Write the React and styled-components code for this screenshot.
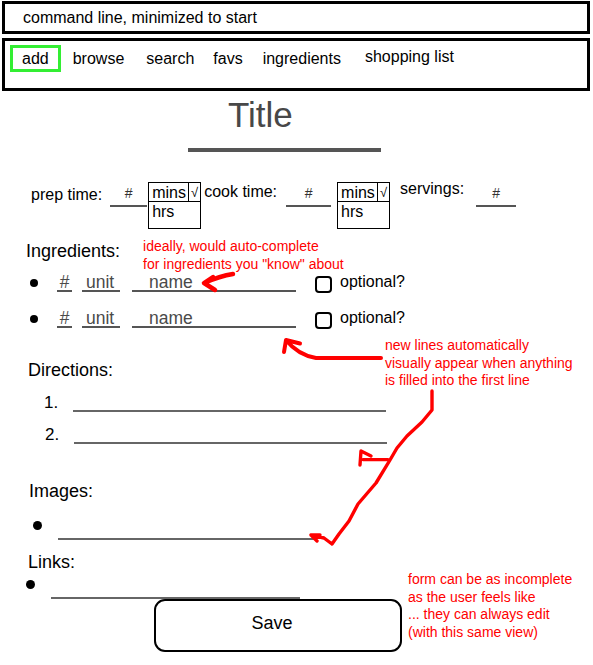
import styled, { createGlobalStyle } from "styled-components";

const GlobalStyle = createGlobalStyle`
  html, body {
    margin: 0;
    padding: 0;
    background: #ffffff;
  }
  body {
    font-family: "Liberation Sans", Arial, Helvetica, sans-serif;
    color: #000;
  }
`;

const Page = styled.div`
  position: relative;
  width: 593px;
  height: 665px;
  overflow: hidden;
  display: flex;
  flex-direction: column;
`;

const CommandBar = styled.div`
  box-sizing: border-box;
  margin: 1px 3px 0 2px;
  height: 33px;
  border: 3px solid #000;
  display: flex;
  align-items: center;
  padding-left: 18px;
  font-size: 16px;
`;

const NavBar = styled.nav`
  box-sizing: border-box;
  margin: 4px 3px 0 2px;
  height: 53px;
  border: 3px solid #000;
  display: flex;
  align-items: flex-start;
  padding: 4px 0 0 5px;
`;

const NavItem = styled.div`
  box-sizing: border-box;
  height: 27px;
  line-height: ${(p) => (p.$active ? "21px" : "27px")};
  font-size: 16px;
  margin-left: ${(p) => p.$gap || 0}px;
  margin-top: ${(p) => (p.$raise ? -p.$raise : 0)}px;
  padding: 0 ${(p) => (p.$active ? "9px" : "0")};
  border: ${(p) => (p.$active ? "3px solid #33ee33" : "none")};
`;

const TitleBlock = styled.div`
  margin-top: 6px;
  padding-left: 188px;
  display: flex;
  flex-direction: column;
  align-items: flex-start;
`;

const TitleText = styled.div`
  margin-left: 40px;
  font-size: 35px;
  line-height: 35px;
  color: #484848;
`;

const TitleBar = styled.div`
  margin-top: 16px;
  width: 193px;
  height: 4px;
  background: #555;
`;

const TimeRow = styled.div`
  margin-top: 28px;
  padding-left: 31px;
  display: flex;
  align-items: flex-start;
`;

const FieldLabel = styled.span`
  font-size: 16px;
  line-height: 18px;
  margin-left: ${(p) => p.$gap || 0}px;
  margin-top: ${(p) => p.$top || 0}px;
  white-space: nowrap;
`;

const NumBlank = styled.div`
  box-sizing: border-box;
  width: ${(p) => p.$w}px;
  height: 27px;
  margin-left: ${(p) => p.$gap || 0}px;
  padding-top: 5px;
  border-bottom: 2px solid #555;
  text-align: center;
  font-size: 14px;
  line-height: 16px;
  color: #333;
`;

const UnitSelect = styled.div`
  box-sizing: border-box;
  width: ${(p) => p.$w}px;
  height: 47px;
  margin-left: ${(p) => p.$gap || 0}px;
  margin-top: 2px;
  border: 1px solid #000;
  display: grid;
  grid-template-columns: 1fr 12px;
  grid-template-rows: 19px 1fr;
  font-size: 16px;
`;

const UnitCell = styled.div`
  padding-left: 3px;
  line-height: 19px;
  border-bottom: ${(p) => (p.$top ? "1px solid #000" : "none")};
  grid-column: ${(p) => (p.$wide ? "1 / 3" : "auto")};
`;

const CheckCell = styled.div`
  border-left: 1px solid #000;
  border-bottom: 1px solid #000;
  font-size: 13px;
  line-height: 19px;
  text-align: center;
`;

const SectionHead = styled.div`
  margin-top: ${(p) => p.$top || 0}px;
  display: flex;
  align-items: flex-start;
`;

const SectionLabel = styled.div`
  margin-left: ${(p) => p.$left || 27}px;
  margin-top: ${(p) => p.$drop || 0}px;
  font-size: 18px;
  line-height: 20px;
`;

const Note = styled.div`
  color: #ff0000;
  font-size: 14px;
  line-height: 17.5px;
  white-space: nowrap;
  margin-left: ${(p) => p.$gap || 0}px;
`;

const FloatNote = styled(Note)`
  position: absolute;
  left: ${(p) => p.$x}px;
  top: ${(p) => p.$y}px;
`;

const IngredientRow = styled.div`
  margin-top: ${(p) => p.$top || 0}px;
  padding-left: 30px;
  display: flex;
  align-items: flex-start;
`;

const Bullet = styled.span`
  flex: none;
  width: ${(p) => p.$size || 8}px;
  height: ${(p) => p.$size || 8}px;
  border-radius: 50%;
  background: #000;
  margin-top: ${(p) => p.$top || 0}px;
`;

const Blank = styled.div`
  box-sizing: border-box;
  width: ${(p) => p.$w}px;
  height: 19px;
  margin-left: ${(p) => p.$gap || 0}px;
  padding: 1px 0 0 ${(p) => p.$pad || 0}px;
  border-bottom: 2px solid #555;
  font-size: 17.5px;
  line-height: 16px;
  color: #4a4a4a;
  text-align: ${(p) => (p.$center ? "center" : "left")};
`;

const CheckBox = styled.span`
  box-sizing: border-box;
  width: 17px;
  height: 17px;
  margin: 3px 0 0 ${(p) => p.$gap || 0}px;
  border: 2px solid #000;
  border-radius: 4px;
`;

const OptionText = styled.span`
  margin-left: 8px;
  font-size: 16px;
  line-height: 18px;
`;

const StepRow = styled.div`
  margin-top: ${(p) => p.$top || 0}px;
  padding-left: ${(p) => 44 + (p.$shift || 0)}px;
  display: flex;
  align-items: flex-end;
  height: 20px;
`;

const StepNum = styled.span`
  width: 29px;
  font-size: 17px;
  line-height: 20px;
`;

const StepLine = styled.div`
  width: 313px;
  border-bottom: 2px solid #666;
  margin-bottom: 1px;
`;

const ListRow = styled.div`
  margin-top: ${(p) => p.$top || 0}px;
  padding-left: ${(p) => p.$left}px;
  display: flex;
  align-items: flex-start;
`;

const ListLine = styled.div`
  box-sizing: border-box;
  width: ${(p) => p.$w}px;
  height: 19px;
  margin-left: ${(p) => p.$gap}px;
  border-bottom: 2px solid #666;
`;

const SaveRow = styled.div`
  padding-left: 154px;
  display: flex;
`;

const SaveButton = styled.button`
  box-sizing: border-box;
  width: 248px;
  height: 53px;
  border: 2.5px solid #000;
  border-radius: 11px;
  background: #fff;
  font-family: inherit;
  font-size: 18px;
  color: #000;
  padding: 0 12px 4px 0;
  cursor: pointer;
`;

const Overlay = styled.svg`
  position: absolute;
  left: 0;
  top: 0;
  pointer-events: none;
`;

const RedStroke = styled.path`
  fill: none;
  stroke: #ff0000;
  stroke-width: ${(p) => p.$w || 3.2};
  stroke-linecap: round;
  stroke-linejoin: round;
`;

const navItems = [
  { label: "browse", gap: 12 },
  { label: "search", gap: 22 },
  { label: "favs", gap: 19 },
  { label: "ingredients", gap: 20 },
  { label: "shopping list", gap: 24, raise: 2 },
];

function TimeUnit({ w, gap }) {
  return (
    <UnitSelect $w={w} $gap={gap}>
      <UnitCell $top>mins</UnitCell>
      <CheckCell>√</CheckCell>
      <UnitCell $wide>hrs</UnitCell>
    </UnitSelect>
  );
}

function Ingredient({ top }) {
  return (
    <IngredientRow $top={top}>
      <Bullet $top={6} />
      <Blank $w={15} $gap={19} $center>#</Blank>
      <Blank $w={38} $gap={10} $pad={4}>unit</Blank>
      <Blank $w={164} $gap={12} $pad={17}>name</Blank>
      <CheckBox $gap={19} />
      <OptionText>optional?</OptionText>
    </IngredientRow>
  );
}

export default function App() {
  return (
    <>
      <GlobalStyle />
      <Page>
        <CommandBar>command line, minimized to start</CommandBar>
        <NavBar>
          <NavItem $active>add</NavItem>
          {navItems.map((item) => (
            <NavItem key={item.label} $gap={item.gap} $raise={item.raise}>
              {item.label}
            </NavItem>
          ))}
        </NavBar>

        <TitleBlock>
          <TitleText>Title</TitleText>
          <TitleBar />
        </TitleBlock>

        <TimeRow>
          <FieldLabel $top={6}>prep time:</FieldLabel>
          <NumBlank $w={37} $gap={8}>#</NumBlank>
          <TimeUnit w={53} gap={1} />
          <FieldLabel $gap={3} $top={3}>cook time:</FieldLabel>
          <NumBlank $w={45} $gap={9}>#</NumBlank>
          <TimeUnit w={53} gap={6} />
          <FieldLabel $gap={10} $top={0}>servings:</FieldLabel>
          <NumBlank $w={40} $gap={12}>#</NumBlank>
        </TimeRow>

        <SectionHead $top={9}>
          <SectionLabel $left={26} $drop={3}>Ingredients:</SectionLabel>
          <Note $gap={23}>
            ideally, would auto-complete
            <br />
            for ingredients you "know" about
          </Note>
        </SectionHead>
        <Ingredient top={0} />
        <Ingredient top={16} />

        <SectionHead $top={31}>
          <SectionLabel $left={28}>Directions:</SectionLabel>
        </SectionHead>
        <StepRow $top={13}>
          <StepNum>1.</StepNum>
          <StepLine />
        </StepRow>
        <StepRow $top={12} $shift={1}>
          <StepNum>2.</StepNum>
          <StepLine />
        </StepRow>

        <SectionHead $top={36}>
          <SectionLabel $left={29}>Images:</SectionLabel>
        </SectionHead>
        <ListRow $top={20} $left={33}>
          <Bullet $size={9} />
          <ListLine $w={256} $gap={16} />
        </ListRow>

        <SectionHead $top={12}>
          <SectionLabel $left={28}>Links:</SectionLabel>
        </SectionHead>
        <ListRow $top={8} $left={26}>
          <Bullet $size={9} />
          <ListLine $w={249} $gap={16} />
        </ListRow>

        <SaveRow>
          <SaveButton>Save</SaveButton>
        </SaveRow>

        <FloatNote $x={385} $y={337}>
          new lines automatically
          <br />
          visually appear when anything
          <br />
          is filled into the first line
        </FloatNote>

        <FloatNote $x={408} $y={571}>
          form can be as incomplete
          <br />
          as the user feels like
          <br />
          ... they can always edit
          <br />
          (with this same view)
        </FloatNote>

        <Overlay width="593" height="665" viewBox="0 0 593 665">
          <RedStroke $w={4.5} d="M233 274 Q220 276 204 283 L215 290 M204 283 L213 277" />
          <RedStroke $w={4} d="M381 358 L316 358 Q298 355 286 340 L284 352 M286 340 L300 343.5" />
          <RedStroke $w={3.4} d="M432 391 L432 410 L422 422 L407 436 L397 448 L390 460 L376 483 L358 504 L349 521 L339 534 L332 544 L324 538 L311 535 M311 535 L320 535 M311 535 L317 541" />
          <RedStroke $w={3.4} d="M388 459.6 L363 459.6 M360 465 L361 451 L371 456" />
        </Overlay>
      </Page>
    </>
  );
}
